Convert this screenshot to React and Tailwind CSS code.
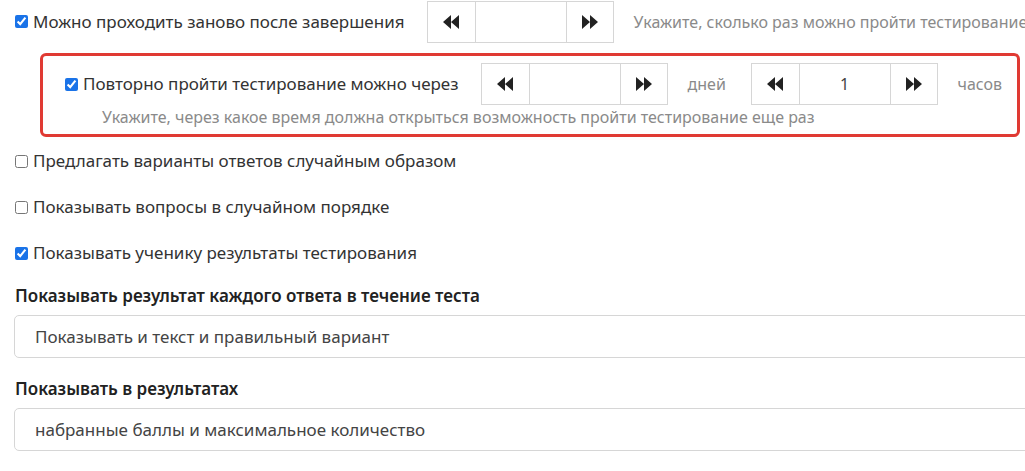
const F = { fontFamily: '"Noto Sans", sans-serif' };

function L() {
  return (<svg width="16" height="14" viewBox="0 0 16 14"><path d="M8 0L0 7l8 7zM16 0L8 7l8 7z" fill="#222"/></svg>);
}
function R() {
  return (<svg width="16" height="14" viewBox="0 0 16 14"><path d="M0 0l8 7-8 7zM8 0l8 7-8 7z" fill="#222"/></svg>);
}
function Stepper({ value = "" }) {
  return (
    <div className="flex h-[42px] shrink-0">
      <div className="w-[49px] border border-[#d6d6d6] flex items-center justify-center bg-white"><L /></div>
      <div className="w-[90px] border-y border-[#d6d6d6] flex items-center justify-center text-[16px] text-[#444]">{value}</div>
      <div className="w-[48px] border border-[#d6d6d6] flex items-center justify-center bg-white"><R /></div>
    </div>
  );
}
function Cb({ checked, label }) {
  return (
    <label className="flex items-center gap-[5px] text-[17px] leading-[22px] text-[#333] whitespace-nowrap">
      <input type="checkbox" defaultChecked={checked} className="w-[13px] h-[13px] accent-[#1a73e8]" />
      {label}
    </label>
  );
}

export default function App() {
  return (
    <div className="w-[1025px] h-[471px] overflow-hidden bg-white pl-[15px]" style={F}>
      <div className="flex items-center h-[43px]">
        <Cb checked label="Можно проходить заново после завершения" />
        <div className="ml-[22px]"><Stepper /></div>
        <span className="ml-[20px] text-[16px] text-[#8a8a8a] whitespace-nowrap">Укажите, сколько раз можно пройти тестирование</span>
      </div>
      <div className="ml-[25px] mt-[10px] w-[980px] h-[84px] border-[3px] border-[#e03a33] rounded-[6px] pl-[22px] pt-[7px]">
        <div className="flex items-center">
          <Cb checked label="Повторно пройти тестирование можно через" />
          <div className="ml-[22px]"><Stepper /></div>
          <span className="ml-[20px] text-[16px] text-[#8a8a8a] w-[63px]">дней</span>
          <Stepper value="1" />
          <span className="ml-[20px] text-[16px] text-[#8a8a8a]">часов</span>
        </div>
        <div className="ml-[37px] mt-[1px] text-[16px] leading-[22px] text-[#8a8a8a] whitespace-nowrap">Укажите, через какое время должна открыться возможность пройти тестирование еще раз</div>
      </div>
      <div className="mt-[13px] flex flex-col gap-[24px]">
        <Cb label="Предлагать варианты ответов случайным образом" />
        <Cb label="Показывать вопросы в случайном порядке" />
        <Cb checked label="Показывать ученику результаты тестирования" />
      </div>
      <div className="mt-[21px] text-[17px] leading-[22px] font-semibold text-[#222]">Показывать результат каждого ответа в течение теста</div>
      <div className="mt-[8px] -ml-px h-[43px] w-[1020px] border border-[#d6d6d6] rounded-l-[5px] flex items-center pl-[20px] text-[17px] text-[#444]">Показывать и текст и правильный вариант</div>
      <div className="mt-[20px] text-[17px] leading-[22px] font-semibold text-[#222]">Показывать в результатах</div>
      <div className="mt-[8px] -ml-px h-[43px] w-[1020px] border border-[#d6d6d6] rounded-l-[5px] flex items-center pl-[20px] text-[17px] text-[#444]">набранные баллы и максимальное количество</div>
    </div>
  );
}
